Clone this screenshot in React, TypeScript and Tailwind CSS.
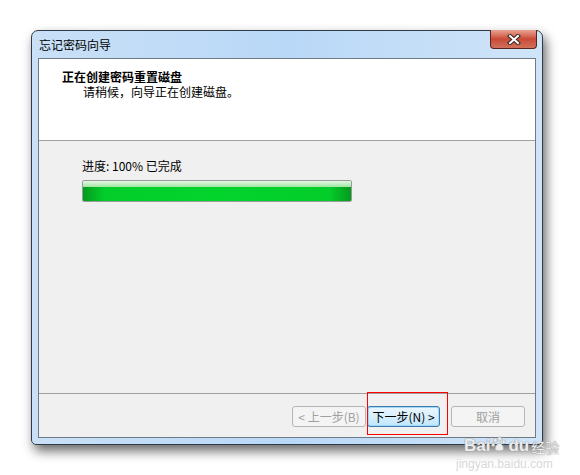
import React from 'react';

const font = { fontFamily: '"Noto Sans CJK SC", "Liberation Sans", sans-serif' };

const CloseGlyph: React.FC = () => (
  <svg width="14" height="11" viewBox="0 0 14 11">
    <path d="M3 2 L11 9 M11 2 L3 9" stroke="#3b2a28" strokeWidth="4.2" strokeLinecap="square" />
    <path d="M3 2 L11 9 M11 2 L3 9" stroke="#ffffff" strokeWidth="2" strokeLinecap="square" />
  </svg>
);

const Paw: React.FC = () => (
  <svg width="16" height="18" viewBox="0 0 22 22" className="mx-[1px] mb-[1px]">
    <g fill="#ececec" stroke="#b0b0b0" strokeWidth="1">
      <ellipse cx="6" cy="6" rx="2.4" ry="3" />
      <ellipse cx="12" cy="4" rx="2.4" ry="3" />
      <ellipse cx="17.5" cy="8" rx="2.2" ry="2.8" />
      <ellipse cx="3" cy="12" rx="2" ry="2.6" />
      <path d="M6 19 C5 14 9 10 11.5 10 C14 10 18 14 17 19 C15 21 8 21 6 19 Z" />
    </g>
  </svg>
);

const App: React.FC = () => {
  return (
    <div className="w-[580px] h-[475px] bg-white relative overflow-hidden text-[12px] text-black" style={font}>
      <div className="pt-[30px] pl-[31px]">
        {/* Window */}
        <div className="relative w-[512px] h-[415px] rounded-t-[7px] rounded-b-[5px] border border-[#2f3b46] bg-gradient-to-r from-[#c9e0f7] via-[#b9d8f7] to-[#cfe4f8] shadow-[3px_6px_12px_rgba(0,0,0,0.6)] flex flex-col px-[6px] pb-[6px]">
          {/* Title bar */}
          <div className="h-[27px] flex items-center pl-[1px] shrink-0">
            <span className="text-[12px] leading-none text-black">忘记密码向导</span>
          </div>
          <div className="absolute top-[-1px] right-[5px] w-[47px] h-[19px] rounded-b-[4px] border border-[#5a2320] border-t-0 bg-gradient-to-b from-[#e8a393] via-[#c94a36] to-[#d0705a] flex items-center justify-center">
            <CloseGlyph />
          </div>

          {/* Client area */}
          <div className="flex-1 flex flex-col border border-[#6f7a85] bg-[#f0f0f0]">
            {/* Header */}
            <div className="h-[82px] bg-white border-b border-[#a0a0a0] pt-[10px] pl-[23px] shrink-0">
              <div className="font-bold text-[12px] leading-[16px]">正在创建密码重置磁盘</div>
              <div className="pl-[21px] leading-[15px] -mt-[1px]">请稍候，向导正在创建磁盘。</div>
            </div>

            {/* Body */}
            <div className="flex-1 pt-[17px] pl-[43px]">
              <div className="leading-[16px]">进度: 100% 已完成</div>
              <div className="mt-[6px] w-[270px] h-[22px] border border-[#9a9a9a] rounded-[2px] overflow-hidden flex flex-col">
                <div className="h-[6px] bg-gradient-to-b from-[#e4f7e4] to-[#9fe6a2]" />
                <div className="flex-1 bg-[linear-gradient(to_right,#049a1f,#03cd2a_8%,#03d42c_50%,#03cd2a_92%,#049a1f)]" />
              </div>
            </div>

            {/* Footer */}
            <div className="h-[44px] border-t border-[#a0a0a0] shrink-0 flex items-start justify-end pt-[12px] pr-[10px]">
              <div className="w-[74px] h-[21px] border border-[#b5b5b5] rounded-[3px] bg-[#f4f4f4] text-[#a0a0a0] flex items-center justify-center leading-none">
                &lt; 上一步(B)
              </div>
              <div className="ml-[1px] w-[73px] h-[21px] border border-[#3d7bad] rounded-[3px] bg-gradient-to-b from-[#eaf6fd] via-[#d9f0fc] to-[#bee6fd] text-black flex items-center justify-center leading-none shadow-[inset_0_0_0_1px_#9fd9f7]">
                下一步(N) &gt;
              </div>
              <div className="ml-[11px] w-[74px] h-[21px] border border-[#b5b5b5] rounded-[3px] bg-[#f4f4f4] text-[#a0a0a0] flex items-center justify-center leading-none">
                取消
              </div>
            </div>
          </div>
        </div>
      </div>

      {/* Annotation box */}
      <div className="absolute left-[367px] top-[392px] w-[81px] h-[43px] border border-[#ff0000]" />

      {/* Watermark */}
      <div className="absolute left-[456px] top-[435px] leading-none pointer-events-none flex flex-col whitespace-nowrap" style={{ fontFamily: '"Liberation Sans", sans-serif' }}>
        <div className="flex items-end text-[#ececec] [text-shadow:0_0_1px_#8a8a8a,0_0_1px_#8a8a8a] pl-[8px]">
          <span className="text-[17px] font-bold">Bai</span>
          <Paw />
          <span className="text-[17px] font-bold">du</span>
          <span className="text-[14px] ml-[2px]" style={font}>经验</span>
        </div>
        <div className="text-[12px] mt-[4px] text-[#d8d8d8]">jingyan.baidu.com</div>
      </div>
    </div>
  );
};

export default App;
